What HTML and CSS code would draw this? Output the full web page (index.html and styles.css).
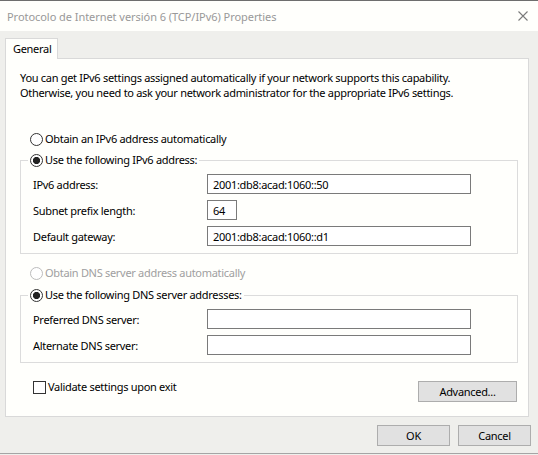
FILE: index.html
```html
<!DOCTYPE html>
<html>
<head>
<meta charset="utf-8">
<title>Protocolo de Internet versión 6 (TCP/IPv6) Properties</title>
<link rel="stylesheet" href="styles.css">
</head>
<body>
    <div class="window">
        <div class="titlebar">
            <span class="title">Protocolo de Internet versión 6 (TCP/IPv6) Properties</span>
            <svg class="close" width="10" height="10" viewBox="0 0 10 10">
                <path d="M0.5 0.5 L9.5 9.5 M9.5 0.5 L0.5 9.5" stroke="#7a7a7a" stroke-width="1.1" fill="none"/>
            </svg>
        </div>

        <div class="dialog">
            <div class="tabs">
                <div class="tab">General</div>
            </div>

            <div class="panel">
                <p class="intro">You can get IPv6 settings assigned automatically if your network supports this capability.<br>Otherwise, you need to ask your network administrator for the appropriate IPv6 settings.</p>

                <label class="option first">
                    <input type="radio" name="ip" class="radio">
                    <span>Obtain an IPv6 address automatically</span>
                </label>

                <fieldset class="group">
                    <legend>
                        <label class="option">
                            <input type="radio" name="ip" class="radio" checked>
                            <span>Use the following IPv6 address:</span>
                        </label>
                    </legend>
                    <div class="field">
                        <span class="field-label">IPv6 address:</span>
                        <input type="text" class="box" value="2001:db8:acad:1060::50">
                    </div>
                    <div class="field">
                        <span class="field-label">Subnet prefix length:</span>
                        <input type="text" class="box small" value="64">
                    </div>
                    <div class="field">
                        <span class="field-label">Default gateway:</span>
                        <input type="text" class="box" value="2001:db8:acad:1060::d1">
                    </div>
                </fieldset>

                <label class="option dns-auto disabled">
                    <input type="radio" name="dns" class="radio" disabled>
                    <span>Obtain DNS server address automatically</span>
                </label>

                <fieldset class="group dns">
                    <legend>
                        <label class="option">
                            <input type="radio" name="dns" class="radio" checked>
                            <span>Use the following DNS server addresses:</span>
                        </label>
                    </legend>
                    <div class="field">
                        <span class="field-label">Preferred DNS server:</span>
                        <input type="text" class="box">
                    </div>
                    <div class="field">
                        <span class="field-label">Alternate DNS server:</span>
                        <input type="text" class="box">
                    </div>
                </fieldset>

                <div class="bottom-row">
                    <label class="option check-row">
                        <input type="checkbox" class="check">
                        <span>Validate settings upon exit</span>
                    </label>
                    <button type="button" class="btn advanced">Advanced...</button>
                </div>
            </div>

            <div class="actions">
                <button type="button" class="btn">OK</button>
                <button type="button" class="btn">Cancel</button>
            </div>
        </div>
    </div>
</body>
</html>
```

FILE: styles.css
```css
body {
    margin: 0;
    font-family: "Noto Sans", sans-serif;
    font-size: 11px;
    letter-spacing: -0.3px;
    color: #000;
    background-color: #efefec;
}

.window {
    width: 538px;
    height: 455px;
    display: flex;
    flex-direction: column;
    box-sizing: border-box;
    border-top: 1px solid #6e6e6e;
    overflow: hidden;
}

/* Barra de titulo */
.titlebar {
    height: 30px;
    flex: none;
    display: flex;
    align-items: center;
    justify-content: space-between;
    padding: 0 10px 0 7px;
    background-color: #fffffc;
}

.title {
    color: #999;
    letter-spacing: -0.05px;
}

.close {
    display: block;
    margin-top: -1px;
}

.dialog {
    flex: 1;
    display: flex;
    flex-direction: column;
    padding-left: 5px;
    padding-right: 9px;
    border-bottom: 1px solid #a5a5a5;
    margin-bottom: 1px;
}

.tabs {
    display: flex;
    margin-top: 7px;
    height: 20px;
}

.tab {
    width: 53px;
    height: 21px;
    box-sizing: border-box;
    padding-left: 7px;
    line-height: 20px;
    border: 1px solid #d9d9d9;
    border-bottom: none;
    background-color: #fffffc;
    position: relative;
    z-index: 1;
}

.panel {
    height: 359px;
    box-sizing: border-box;
    border: 1px solid #d9d9d9;
    background-color: #fffffc;
    padding: 11px 10px 0 14px;
}

.intro {
    margin: 0;
    line-height: 15px;
}

.option {
    display: flex;
    align-items: center;
    height: 16px;
    line-height: 16px;
}

.option span {
    margin-left: 2px;
}

.option.first {
    margin: 31px 0 0 10px;
}

.option.disabled {
    color: #a0a0a0;
}

.radio {
    appearance: none;
    -webkit-appearance: none;
    width: 13px;
    height: 13px;
    margin: 0;
    border: 1px solid #333;
    border-radius: 50%;
    background-color: #fff;
    box-sizing: border-box;
}

.radio:checked {
    background: radial-gradient(circle, #222 0, #222 3.3px, #fff 3.9px);
}

.radio:disabled {
    border-color: #bcbcbc;
}

.check {
    appearance: none;
    -webkit-appearance: none;
    width: 13px;
    height: 13px;
    margin: 0;
    border: 1px solid #333;
    background-color: #fff;
    box-sizing: border-box;
}

/* Grupos */
.group {
    margin: 5px 0 0 0;
    padding: 6px 12px 7px 12px;
    border: 1px solid #dcdcdc;
    display: flex;
    flex-direction: column;
    gap: 6px;
}

.group legend {
    padding: 0 2px;
    margin-left: -5px;
}

.field {
    display: flex;
    align-items: center;
    height: 20px;
}

.field-label {
    width: 174px;
    flex: none;
}

.box {
    width: 264px;
    height: 20px;
    box-sizing: border-box;
    border: 1px solid #7a7a7a;
    margin: 0;
    padding: 0 5px;
    font-family: inherit;
    font-size: 11px;
    letter-spacing: -0.3px;
    color: #000;
    background-color: #fff;
    outline: none;
}

.box.small {
    width: 30px;
}

.dns-auto {
    margin: 11px 0 0 10px;
}

.group.dns {
    margin-top: 6px;
}

.bottom-row {
    display: flex;
    justify-content: space-between;
    align-items: flex-start;
    margin-top: 16px;
}

.check-row {
    margin-left: 13px;
}

.btn {
    width: 73px;
    height: 21px;
    box-sizing: border-box;
    border: 1px solid #adadad;
    background-color: #e1e1e1;
    font-family: inherit;
    font-size: 11px;
    letter-spacing: -0.3px;
    color: #000;
    padding: 0;
    margin: 0;
}

.btn.advanced {
    width: 99px;
    margin-top: 2px;
    margin-right: 1px;
}

.actions {
    display: flex;
    justify-content: flex-end;
    gap: 8px;
    margin-top: 8px;
    margin-right: -2px;
}
```
